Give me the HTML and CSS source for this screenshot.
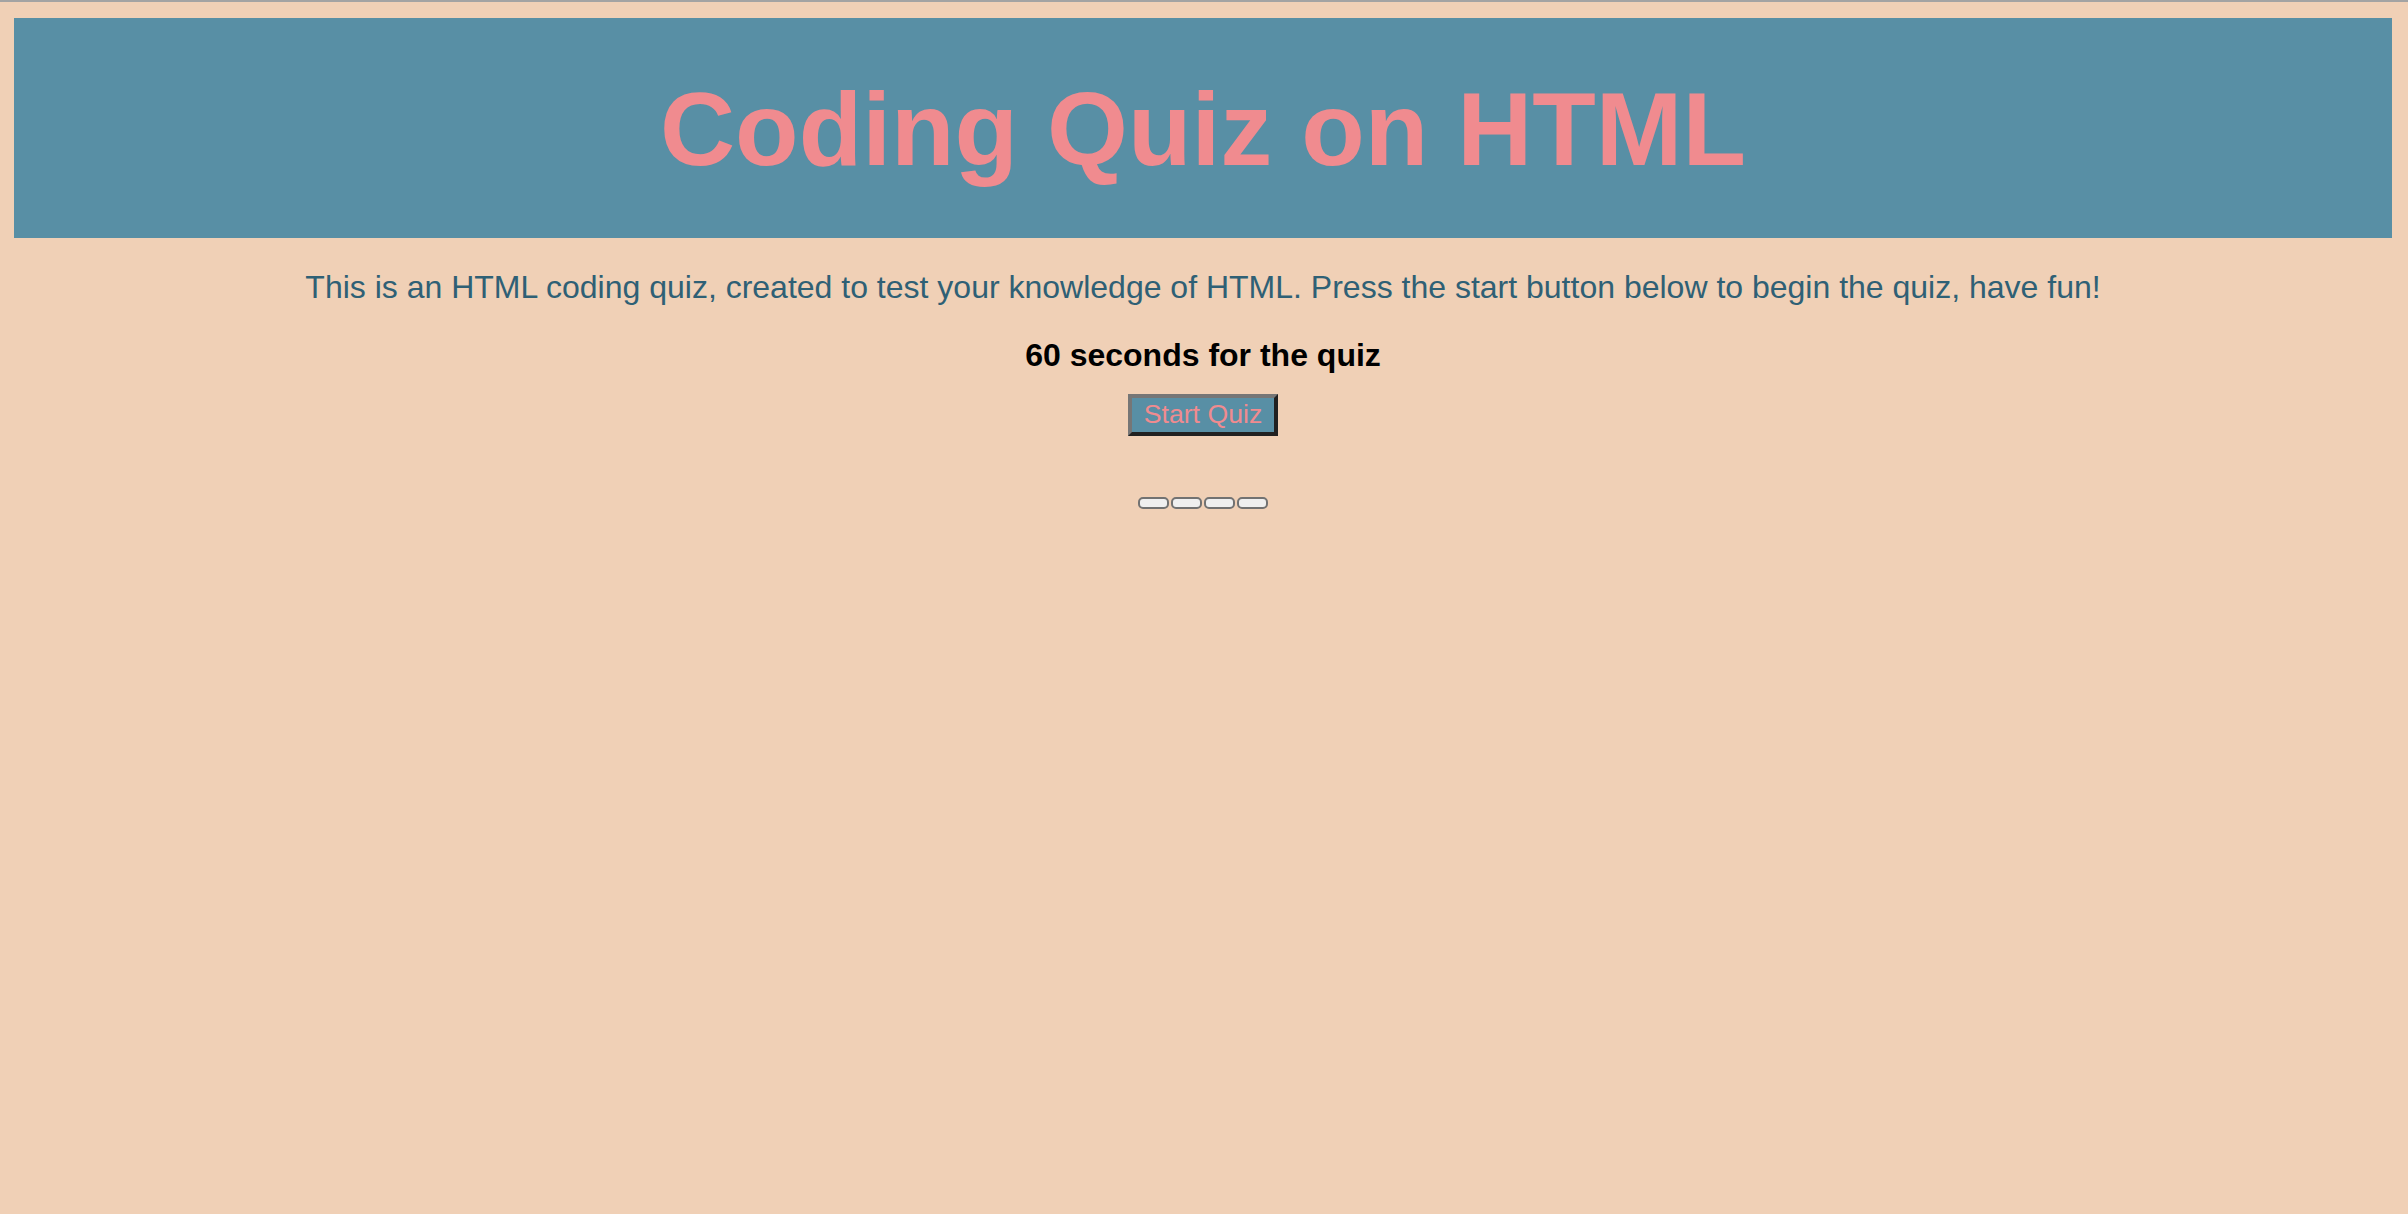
FILE: index.html
```html
<!DOCTYPE html>
<html lang="en">
<head>
<meta charset="utf-8">
<title>Coding Quiz on HTML</title>
<link rel="stylesheet" href="styles.css">
</head>
<body>
<header class="banner">
  <h1 class="title">Coding Quiz on HTML</h1>
</header>
<main class="content">
  <p class="intro">This is an HTML coding quiz, created to test your knowledge of HTML. Press the start button below to begin the quiz, have fun!</p>
  <p class="timer">60 seconds for the quiz</p>
  <button class="start" type="button">Start Quiz</button>
  <div class="answers">
    <button class="answer" type="button"></button>
    <button class="answer" type="button"></button>
    <button class="answer" type="button"></button>
    <button class="answer" type="button"></button>
  </div>
</main>
</body>
</html>
```
FILE: styles.css
```css
html, body {
  margin: 0;
  padding: 0;
}
body {
  background: #f0d0b6;
  border-top: 2px solid #a3a3a3;
  padding: 16px 16px 0 14px;
  min-height: 1196px;
  font-family: "Liberation Sans", Arial, Helvetica, sans-serif;
}
.banner {
  background: #588fa5;
  height: 220px;
  display: flex;
  align-items: flex-start;
  justify-content: center;
}
.title {
  margin: 0;
  padding-top: 51px;
  font-size: 104px;
  line-height: 120px;
  font-weight: bold;
  color: #f08b8f;
}
.content {
  display: flex;
  flex-direction: column;
  align-items: center;
  text-align: center;
}
.intro {
  margin: 31px 0 0;
  font-size: 32px;
  line-height: 36px;
  color: #2f6075;
}
.timer {
  margin: 31px 0 0;
  font-size: 32px;
  line-height: 38px;
  font-weight: bold;
  color: #000;
}
.start {
  margin-top: 20px;
  height: 42px;
  box-sizing: border-box;
  padding: 1px 12px 3px;
  font-family: "Liberation Sans", Arial, Helvetica, sans-serif;
  font-size: 26.67px;
  line-height: 30px;
  color: #f08b8f;
  background: #588fa5;
  border-width: 4px;
  border-style: solid;
  border-color: #767676 #212121 #212121 #767676;
  border-radius: 0;
}
.answers {
  margin-top: 61px;
  display: flex;
  gap: 2px;
}
.answer {
  width: 31px;
  height: 12px;
  box-sizing: border-box;
  padding: 0;
  background: #efefef;
  border: 2px solid #727272;
  border-radius: 5px;
}
```
